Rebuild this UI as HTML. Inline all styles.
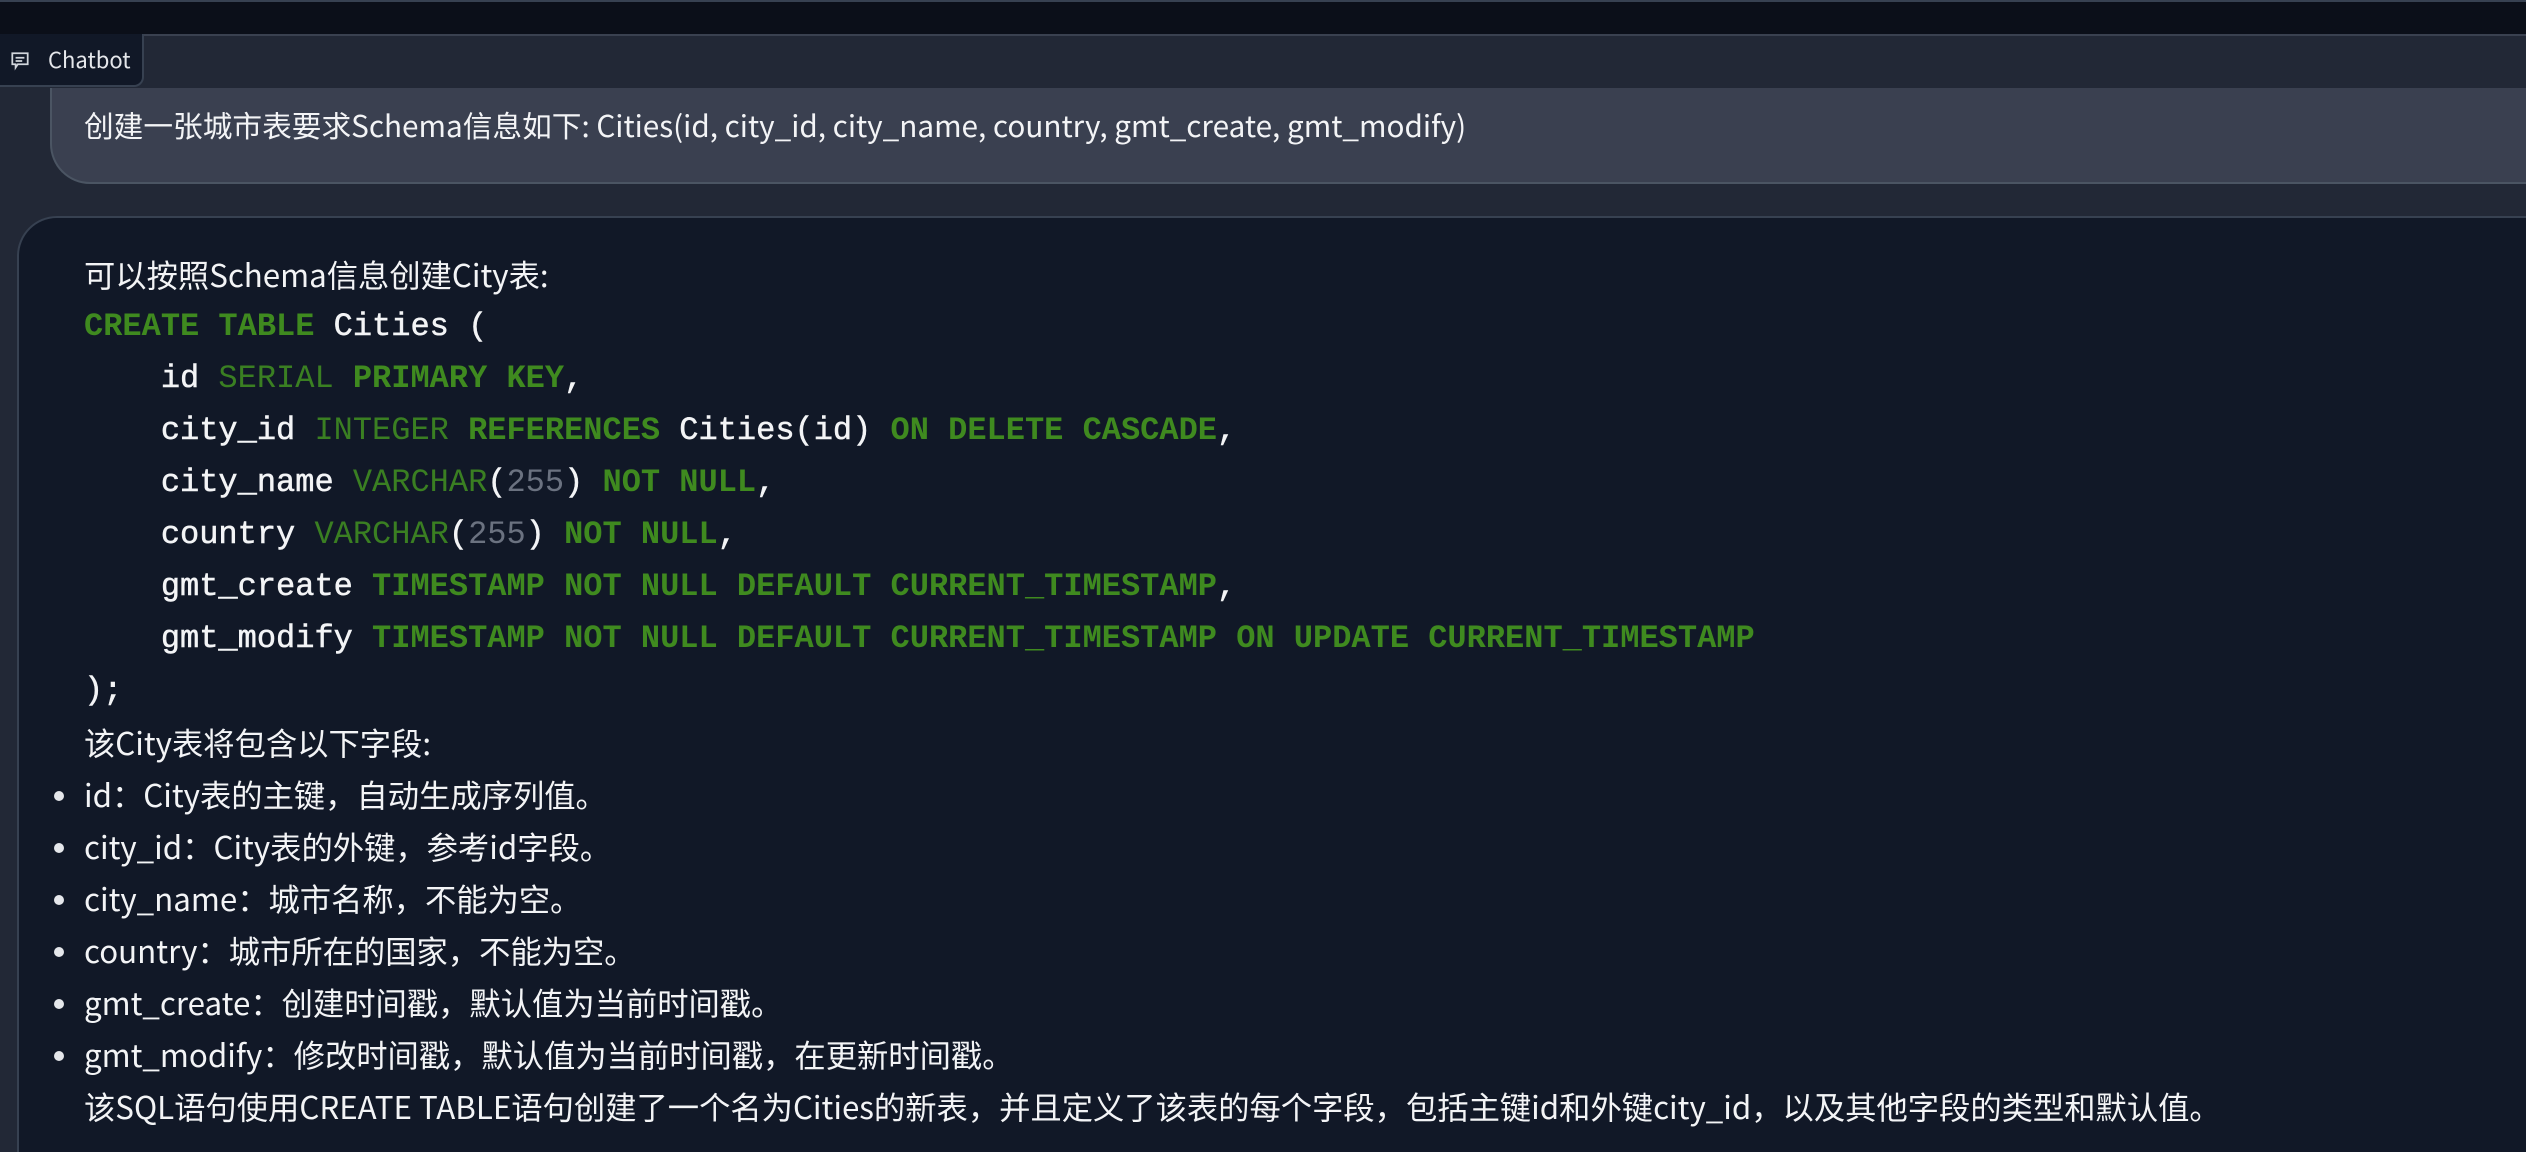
<!DOCTYPE html>
<html><head><meta charset="utf-8"><style>
html,body{margin:0;padding:0;width:2526px;height:1152px;overflow:hidden;}
body{background:#222836;position:relative;font-family:"Noto Sans CJK SC","Liberation Sans",sans-serif;color:#e5e7eb;}
.top{position:absolute;left:0;top:0;width:2526px;height:36px;background:#0b0f19;border-top:2px solid #374151;border-bottom:2px solid #3a4150;box-sizing:border-box;}
.tab{position:absolute;left:-2px;top:34px;width:146px;height:53px;background:#111827;border:2px solid #374151;border-top:none;border-radius:0 0 10px 0;box-sizing:border-box;}
.tab span{position:absolute;left:48px;top:10px;font-size:22px;line-height:30px;color:#e5e7eb;}
.tab svg{position:absolute;left:9px;top:16px;}
.user{position:absolute;left:50px;top:88px;width:2600px;height:96px;background:#3a4050;border-bottom:2px solid #4b5563;border-left:2px solid #4b5563;border-radius:0 0 0 40px;box-sizing:border-box;}
.user div{position:absolute;left:32px;top:15px;font-size:29.7px;line-height:44px;color:#f3f4f6;white-space:nowrap;}
.bot{position:absolute;left:17px;top:216px;width:2600px;height:936px;background:#111827;border:2px solid #374151;border-bottom:none;border-radius:40px 0 0 0;box-sizing:border-box;}
.content{position:absolute;left:84px;top:249px;}
.l{height:52px;line-height:52px;font-size:31.3px;white-space:pre;color:#f3f4f6;}
.c{font-family:"Liberation Mono",monospace;font-size:32px;color:#f3f4f6;-webkit-text-stroke:0.5px #f3f4f6;}
.k{color:#3f8a1f;font-weight:bold;-webkit-text-stroke:0;}
.t{color:#3a7f22;-webkit-text-stroke:0;}
.n{color:#6b7280;-webkit-text-stroke:0;}
.b{position:relative;}
.b:before{content:"";position:absolute;left:-30px;top:22px;width:10px;height:10px;border-radius:50%;background:#e5e7eb;}
</style></head><body>
<div class="top"></div>
<div class="user"><div>创建一张城市表要求Schema信息如下: Cities(id, city_id, city_name, country, gmt_create, gmt_modify)</div></div>
<div class="bot"></div>
<div class="tab"><svg width="22" height="22" viewBox="0 0 20 20" fill="none" stroke="#d1d5db" stroke-width="1.6"><path d="M3 3h14v10H8l-2 3v-3H3z"/><path d="M6 7h8M6 10h6"/></svg><span>Chatbot</span></div>
<div class="content">
<div class="l">可以按照Schema信息创建City表:</div>
<div class="l c"><span class="k">CREATE</span> <span class="k">TABLE</span> Cities (</div>
<div class="l c">    id <span class="t">SERIAL</span> <span class="k">PRIMARY</span> <span class="k">KEY</span>,</div>
<div class="l c">    city_id <span class="t">INTEGER</span> <span class="k">REFERENCES</span> Cities(id) <span class="k">ON</span> <span class="k">DELETE</span> <span class="k">CASCADE</span>,</div>
<div class="l c">    city_name <span class="t">VARCHAR</span>(<span class="n">255</span>) <span class="k">NOT</span> <span class="k">NULL</span>,</div>
<div class="l c">    country <span class="t">VARCHAR</span>(<span class="n">255</span>) <span class="k">NOT</span> <span class="k">NULL</span>,</div>
<div class="l c">    gmt_create <span class="k">TIMESTAMP</span> <span class="k">NOT</span> <span class="k">NULL</span> <span class="k">DEFAULT</span> <span class="k">CURRENT_TIMESTAMP</span>,</div>
<div class="l c">    gmt_modify <span class="k">TIMESTAMP</span> <span class="k">NOT</span> <span class="k">NULL</span> <span class="k">DEFAULT</span> <span class="k">CURRENT_TIMESTAMP</span> <span class="k">ON</span> <span class="k">UPDATE</span> <span class="k">CURRENT_TIMESTAMP</span></div>
<div class="l c">);</div>
<div class="l">该City表将包含以下字段:</div>
<div class="l b">id：City表的主键，自动生成序列值。</div>
<div class="l b">city_id：City表的外键，参考id字段。</div>
<div class="l b">city_name：城市名称，不能为空。</div>
<div class="l b">country：城市所在的国家，不能为空。</div>
<div class="l b">gmt_create：创建时间戳，默认值为当前时间戳。</div>
<div class="l b">gmt_modify：修改时间戳，默认值为当前时间戳，在更新时间戳。</div>
<div class="l">该SQL语句使用CREATE TABLE语句创建了一个名为Cities的新表，并且定义了该表的每个字段，包括主键id和外键city_id，以及其他字段的类型和默认值。</div>
</div>
</body></html>
